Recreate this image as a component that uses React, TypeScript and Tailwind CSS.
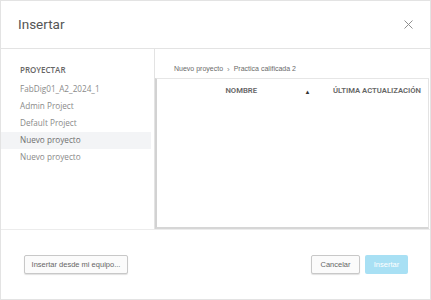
export default function App() {
  const projects = ['FabDig01_A2_2024_1', 'Admin Project', 'Default Project', 'Nuevo proyecto', 'Nuevo proyecto']

  return (
    <div className="w-[431px] h-[300px] bg-white border border-[#e3e3e3] flex flex-col font-['Open_Sans',sans-serif] text-[#6b6b6b]">
      {/* header */}
      <div className="h-[48px] shrink-0 flex items-center justify-between pl-[17px] pr-[17px] border-b border-[#e3e3e3]">
        <h1 className="text-[13.5px] text-[#555] font-['Roboto',sans-serif] pb-[1px]">Insertar</h1>
        <button className="text-[#8f8f8f]">
          <svg width="9" height="9" viewBox="0 0 9 9" fill="none" stroke="currentColor" strokeWidth="1">
            <path d="M0.5 0.5 L8.5 8.5 M8.5 0.5 L0.5 8.5" />
          </svg>
        </button>
      </div>

      {/* body */}
      <div className="flex h-[180px] shrink-0">
        <div className="w-[154px] shrink-0 border-r border-[#e3e3e3] pt-[15px]">
          <div className="pl-[19px] text-[8px] font-semibold text-[#666] h-[17px] leading-[12px]">PROYECTAR</div>
          <ul className="pr-[3px]">
            {projects.map((p, i) => (
              <li
                key={i}
                className={`pl-[19px] h-[17px] flex items-center text-[8.2px] ${i === 3 ? 'bg-[#f3f4f6] text-[#707070]' : 'text-[#8a8a8a]'}`}
              >
                {p}
              </li>
            ))}
          </ul>
        </div>

        <div className="flex-1 flex flex-col pt-[13px] pr-[1px]">
          <div className="pl-[19px] h-[15px] flex items-center gap-[4px] text-[7px] text-[#6a6a6a] font-['Liberation_Sans',sans-serif]">
            <span>Nuevo proyecto</span>
            <span className="text-[8px] text-[#888]">›</span>
            <span>Practica calificada 2</span>
          </div>
          <div className="flex-1 mt-[1px] border-t border-[#e6e6e6] border-l-2 border-l-[#d2d2d2] border-r border-r-[#e3e3e3] border-b-2 border-b-[#d6d6d6]">
            <div className="h-[24px] flex items-center whitespace-nowrap text-[7.7px] font-semibold text-[#666] font-['Roboto',sans-serif]">
              <span className="w-[100px] text-right">NOMBRE</span>
              <span className="ml-[47px] w-[7px] text-center text-[6px] text-[#333]">▲</span>
              <span className="ml-[22px]">ÚLTIMA ACTUALIZACIÓN</span>
            </div>
          </div>
        </div>
      </div>

      {/* footer */}
      <div className="flex-1 border-t border-[#ececec] flex items-center justify-between pl-[23px] pr-[22px] font-['Liberation_Sans',sans-serif]">
        <button className="h-[19px] w-[104px] text-[7.5px] text-[#666] bg-[#fbfbfb] border border-[#c8c8c8] rounded-[2px] shadow-[0_1px_1px_rgba(0,0,0,0.12)] whitespace-nowrap">
          Insertar desde mi equipo...
        </button>
        <div className="flex gap-[5px]">
          <button className="h-[19px] w-[49px] text-[7.5px] text-[#666] bg-[#fbfbfb] border border-[#c8c8c8] rounded-[2px] shadow-[0_1px_1px_rgba(0,0,0,0.12)]">
            Cancelar
          </button>
          <button className="h-[19px] w-[43px] text-[7.5px] text-white bg-[#a8e0f4] rounded-[2px]">
            Insertar
          </button>
        </div>
      </div>
    </div>
  )
}
